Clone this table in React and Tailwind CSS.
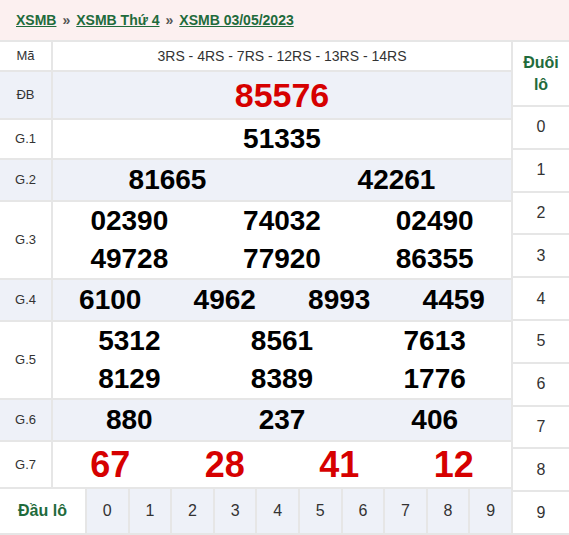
import React from "react";

const font = { fontFamily: '"Liberation Sans", Arial, sans-serif' };

function Row({ label, bg, h, children }) {
  return (
    <div className={`flex gap-[2px] ${h}`}>
      <div className={`w-[51px] shrink-0 flex items-center justify-center text-[13px] text-[#333] ${bg}`}>{label}</div>
      <div className={`flex-1 ${bg}`}>{children}</div>
    </div>
  );
}

function Cols({ items, cls }) {
  return (
    <div className="flex h-full">
      {items.map((n, i) => (
        <div key={i} className={`flex-1 flex items-center justify-center font-bold ${cls}`}>{n}</div>
      ))}
    </div>
  );
}

function Grid3({ rows }) {
  return (
    <div className="flex flex-col justify-center h-full">
      {rows.map((r, i) => (
        <div key={i} className="flex h-[38px]">
          {r.map((n, j) => (
            <div key={j} className="flex-1 flex items-center justify-center font-bold text-[28px] text-black">{n}</div>
          ))}
        </div>
      ))}
    </div>
  );
}

export default function App() {
  const blue = "bg-[#eef1f8]";
  const white = "bg-white";
  return (
    <div className="w-[569px] h-[535px] bg-white overflow-hidden" style={font}>
      <div className="h-[40px] bg-[#fcf0f0] flex items-center pl-[16px] text-[14px] font-bold">
        <a className="text-[#1f6b3c] underline">XSMB</a>
        <span className="mx-[6px] text-[#555]">»</span>
        <a className="text-[#1f6b3c] underline">XSMB Thứ 4</a>
        <span className="mx-[6px] text-[#555]">»</span>
        <a className="text-[#1f6b3c] underline">XSMB 03/05/2023</a>
      </div>
      <div className="flex gap-[2px] bg-[#e6e6e6] py-[2px] h-[495px]">
        <div className="w-[511px] shrink-0 flex flex-col gap-[2px]">
          <Row label="Mã" bg={white} h="h-[28px]">
            <div className="h-full flex items-center justify-center text-[14px] text-[#333]">3RS - 4RS - 7RS - 12RS - 13RS - 14RS</div>
          </Row>
          <Row label="ĐB" bg={blue} h="h-[46px]">
            <div className="h-full flex items-center justify-center font-bold text-[34px] text-[#d60000]">85576</div>
          </Row>
          <Row label="G.1" bg={white} h="h-[38px]">
            <Cols items={["51335"]} cls="text-[28px] text-black" />
          </Row>
          <Row label="G.2" bg={blue} h="h-[40px]">
            <Cols items={["81665", "42261"]} cls="text-[28px] text-black" />
          </Row>
          <Row label="G.3" bg={white} h="h-[76px]">
            <Grid3 rows={[["02390", "74032", "02490"], ["49728", "77920", "86355"]]} />
          </Row>
          <Row label="G.4" bg={blue} h="h-[40px]">
            <Cols items={["6100", "4962", "8993", "4459"]} cls="text-[28px] text-black" />
          </Row>
          <Row label="G.5" bg={white} h="h-[76px]">
            <Grid3 rows={[["5312", "8561", "7613"], ["8129", "8389", "1776"]]} />
          </Row>
          <Row label="G.6" bg={blue} h="h-[40px]">
            <Cols items={["880", "237", "406"]} cls="text-[28px] text-black" />
          </Row>
          <Row label="G.7" bg={white} h="h-[45px]">
            <Cols items={["67", "28", "41", "12"]} cls="text-[36px] text-[#d60000]" />
          </Row>
          <div className="flex gap-[2px] h-[44px]">
            <div className="w-[85px] shrink-0 bg-white flex items-center justify-center font-bold text-[16px] text-[#1f6b3c]">Đầu lô</div>
            {[0, 1, 2, 3, 4, 5, 6, 7, 8, 9].map((d) => (
              <div key={d} className="flex-1 bg-[#eef1f8] flex items-center justify-center text-[16px] text-[#333]">{d}</div>
            ))}
          </div>
        </div>
        <div className="flex-1 flex flex-col gap-[2px]">
          <div className="h-[63px] bg-white flex items-center justify-center text-center font-bold text-[16px] leading-[22px] text-[#1f6b3c]">
            Đuôi<br />lô
          </div>
          {[0, 1, 2, 3, 4, 5, 6, 7, 8, 9].map((d) => (
            <div key={d} className="flex-1 bg-white flex items-center justify-center text-[16px] text-[#333]">{d}</div>
          ))}
        </div>
      </div>
    </div>
  );
}
